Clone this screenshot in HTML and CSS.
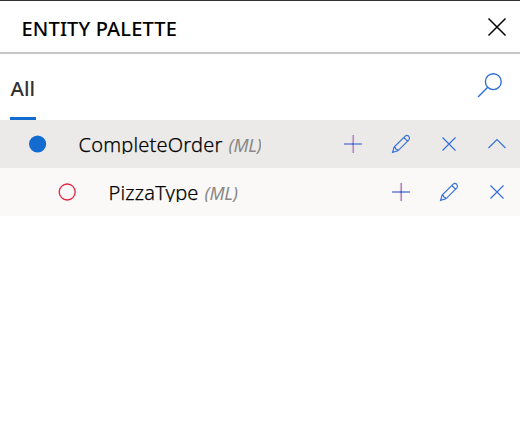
FILE: index.html
```html
<!DOCTYPE html>
<html lang="en">
<head>
<meta charset="utf-8">
<title>Entity palette</title>
<link rel="stylesheet" href="styles.css">
</head>
<body>
<svg class="defs" width="0" height="0">
  <symbol id="plus" viewBox="0 0 48 48"><path d="M23.5 15V33" stroke="#e3b0cf"/><path d="M24.5 15V33" stroke="#68a9de"/><path d="M15 24H33" stroke="#8d9bdc" stroke-width="2"/><path d="M23 24H25" stroke="#4c70cd" stroke-width="2"/></symbol>
  <symbol id="pencil" viewBox="0 0 48 48"><path d="M15.6 32.4L17.1 27L28.2 16.1Q30 14.7 31.7 16.3Q33.3 18 31.9 19.8L20.9 30.8ZM26.8 17.5L30.5 21.2M17.1 27.2L18.3 27.6L18.9 29.1L20.4 29.6L20.8 30.8"/></symbol>
  <symbol id="cross" viewBox="0 0 48 48"><path d="M17.5 17.5L30.5 30.5M30.5 17.5L17.5 30.5"/></symbol>
  <symbol id="chevron" viewBox="0 0 48 48"><path d="M15.5 28L24 19.6L32.5 28"/></symbol>
</svg>
<main class="panel">
  <header class="header">
    <h1 class="title">ENTITY PALETTE</h1>
    <button class="close" aria-label="Close"><svg width="20" height="20" viewBox="0 0 20 20"><path d="M1.5 1.5L18.5 18.5M18.5 1.5L1.5 18.5"/></svg></button>
  </header>
  <nav class="tabs">
    <span class="tab">All</span>
    <button class="search" aria-label="Search"><svg width="28" height="28" viewBox="0 0 28 28"><circle cx="17.3" cy="10.7" r="7.9"/><path d="M11.7 16.3L2 26"/></svg></button>
  </nav>
  <ul class="list">
    <li class="row row-parent">
      <svg class="dot" width="18" height="18" viewBox="0 0 18 18"><circle class="filled" cx="8.6" cy="9" r="8.6"/></svg>
      <span class="label"><span class="name">CompleteOrder</span><em class="kind">(ML)</em></span>
      <span class="actions">
        <svg><use href="#plus"/></svg><svg><use href="#pencil"/></svg><svg><use href="#cross"/></svg><svg><use href="#chevron"/></svg>
      </span>
    </li>
    <li class="row row-child">
      <svg class="dot" width="18" height="18" viewBox="0 0 18 18"><circle class="ring" cx="9.2" cy="9" r="8"/></svg>
      <span class="label"><span class="name">PizzaType</span><em class="kind">(ML)</em></span>
      <span class="actions">
        <svg><use href="#plus"/></svg><svg><use href="#pencil"/></svg><svg><use href="#cross"/></svg>
      </span>
    </li>
  </ul>
</main>
</body>
</html>
```
FILE: styles.css
```css
* { box-sizing: border-box; }
body { margin: 0; background: #fff; font-family: "Noto Sans", "Open Sans", sans-serif; overflow: hidden; }
button { border: 0; background: none; padding: 0; }
svg { display: block; fill: none; }
.defs { position: absolute; }
.panel { height: 448px; border-top: 1px solid #323130; }
.header { display: flex; justify-content: space-between; height: 53px; padding: 0 13px 0 21.5px; border-bottom: 2px solid #c8c8c8; }
.title { margin: 0; font-size: 20px; font-weight: 500; line-height: 28px; padding-top: 14px; letter-spacing: 0.16px; color: #000; white-space: nowrap; }
.close { align-self: flex-start; margin-top: 16px; stroke: #000; stroke-width: 1.5; }
.tabs { display: flex; justify-content: space-between; height: 66px; padding: 0 16px 0 10px; }
.tab { width: 26px; border-bottom: 3px solid #136bd0; padding: 19px 0 0 0.6px; font-size: 20.5px; font-weight: 500; line-height: 30px; color: #323130; }
.search { align-self: flex-start; margin-top: 17px; stroke: #2f70d4; stroke-width: 1.4; }
.list { margin: 0; padding: 0; list-style: none; }
.row { display: flex; align-items: center; height: 48px; margin-right: -1px; }
.row-parent { background: #ebeae9; padding-left: 29px; }
.row-child { background: #faf9f8; padding-left: 58px; }
.dot { flex: none; }
.filled { fill: #136bd0; }
.ring { stroke: #e81f3f; stroke-width: 1.3; }
.label { display: flex; align-items: baseline; margin-left: 31.5px; height: 20px; line-height: 22px; font-size: 20px; color: #000; overflow: hidden; white-space: nowrap; }
.row-child .label { margin-left: 32.5px; }
.name { font-weight: 300; letter-spacing: 0.2px; -webkit-text-stroke: 0.25px #000; }
.kind { margin-left: 6px; font-size: 18px; color: #8a8886; letter-spacing: -0.3px; }
.actions { display: flex; margin-left: auto; stroke: #3471d5; stroke-width: 1.2; }
.actions svg { width: 48px; height: 48px; }
```
